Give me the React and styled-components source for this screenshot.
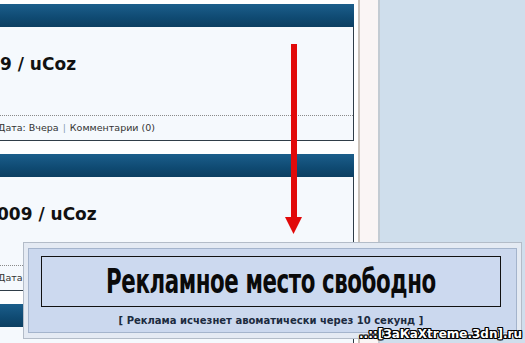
import React from "react";
import styled, { createGlobalStyle } from "styled-components";

const Global = createGlobalStyle`
  html, body { margin: 0; padding: 0; }
  body { width: 525px; height: 343px; overflow: hidden; background: #fff; }
  #root { width: 525px; height: 343px; }
`;

const Page = styled.div`
  position: relative;
  width: 525px;
  height: 343px;
  overflow: hidden;
  display: flex;
  font-family: "DejaVu Sans", Verdana, sans-serif;
`;

const Content = styled.div`
  width: 354px;
  flex: none;
  padding-top: 4px;
  display: flex;
  flex-direction: column;
  gap: 13px;
  background: #fff;
  overflow: hidden;
`;

const Gutter = styled.div`
  width: ${(p) => p.$w}px;
  flex: none;
  background: ${(p) => p.$bg};
`;

const Sidebar = styled.div`
  flex: 1;
  background: #cfdeec;
`;

const Post = styled.div`
  display: flex;
  flex-direction: column;
`;

const PostHeader = styled.div`
  height: 23px;
  background: linear-gradient(#1b5e8b, #0f4a72 60%, #0c3f62);
`;

const PostBody = styled.div`
  height: 113px;
  background: #f5f9fd;
  border-right: 1px solid #2f3d48;
  border-bottom: 1px solid #2f3d48;
  display: flex;
  flex-direction: column;
`;

const TitleArea = styled.div`
  height: 89px;
  padding-top: 27px;
  box-sizing: border-box;
  border-bottom: 1px dotted #8a8a8a;
  overflow: hidden;
`;

const Title = styled.div`
  font-size: 17px;
  font-weight: bold;
  line-height: 20px;
  color: #111;
  white-space: nowrap;
  margin-left: ${(p) => p.$shift}px;
`;

const Meta = styled.div`
  height: 23px;
  line-height: 23px;
  font-family: "DejaVu Sans", Tahoma, sans-serif;
  font-size: 9.5px;
  color: #333;
  white-space: nowrap;
  margin-left: -2px;
`;

const Sep = styled.span`
  color: #8aa0b4;
  padding: 0 4px;
`;

const Arrow = styled.svg`
  position: absolute;
  left: 284px;
  top: 44px;
`;

const Popup = styled.div`
  position: absolute;
  left: 23px;
  top: 242px;
  width: 499px;
  height: 97px;
  box-sizing: border-box;
  border: 1px solid #b3bcc8;
  background: #e4eaf3;
  padding: 5px 5px 5px 4px;
  display: flex;
`;

const Panel = styled.div`
  flex: 1;
  border: 1px solid #a4b4cc;
  background: #cbd8ee;
  padding: 7px 15px 0 12px;
  display: flex;
  flex-direction: column;
`;

const AdBox = styled.div`
  height: 49px;
  border: 1px solid #111;
  background: #ccd9ef;
  display: flex;
  align-items: center;
  justify-content: center;
  overflow: hidden;
`;

const AdText = styled.div`
  flex: none;
  font-family: "DejaVu Sans Condensed", "DejaVu Sans", sans-serif;
  font-stretch: condensed;
  font-weight: bold;
  font-size: 33px;
  line-height: 36px;
  color: #0a0a0a;
  letter-spacing: -0.6px;
  white-space: nowrap;
  transform: scaleX(0.72);
`;

const Note = styled.div`
  margin-top: 8px;
  text-align: center;
  font-family: "DejaVu Sans", Tahoma, sans-serif;
  font-weight: bold;
  font-size: 10px;
  color: #1c2b3f;
  white-space: nowrap;
`;

const Watermark = styled.div`
  position: absolute;
  right: 3px;
  bottom: 2px;
  font-family: "DejaVu Sans", Verdana, sans-serif;
  font-weight: bold;
  font-size: 12px;
  line-height: 13px;
  color: #fff;
  white-space: nowrap;
  text-shadow: 1px 0 0 #000, -1px 0 0 #000, 0 1px 0 #000, 0 -1px 0 #000,
    1px 1px 0 #000, -1px -1px 0 #000, 1px -1px 0 #000, -1px 1px 0 #000;
`;

const posts = [
  { title: "9 / uCoz", shift: 0 },
  { title: "009 / uCoz", shift: -3 },
  { title: "", shift: 0 },
];

export default function App() {
  return (
    <>
      <Global />
      <Page>
        <Content>
          {posts.map((p, i) => (
            <Post key={i}>
              <PostHeader />
              <PostBody>
                <TitleArea>
                  <Title $shift={p.shift}>{p.title}</Title>
                </TitleArea>
                <Meta>
                  Дата: Вчера<Sep>|</Sep>Комментарии (0)
                </Meta>
              </PostBody>
            </Post>
          ))}
        </Content>
        <Gutter $w={4} $bg="#ffffff" />
        <Gutter $w={2} $bg="#cbc3bb" />
        <Gutter $w={18} $bg="#faf5f5" />
        <Gutter $w={2} $bg="#c3cbd3" />
        <Sidebar />

        <Arrow width="19" height="191" viewBox="0 0 19 191">
          <rect x="7" y="0" width="6" height="174" fill="#e10a0a" />
          <polygon points="1,173 18,173 9.5,190" fill="#e10a0a" />
        </Arrow>

        <Popup>
          <Panel>
            <AdBox>
              <AdText>Рекламное место свободно</AdText>
            </AdBox>
            <Note>[ Реклама исчезнет авоматически через 10 секунд ]</Note>
          </Panel>
        </Popup>
        <Watermark>..::[ЗаКаXtreme.3dn].ru</Watermark>
      </Page>
    </>
  );
}
